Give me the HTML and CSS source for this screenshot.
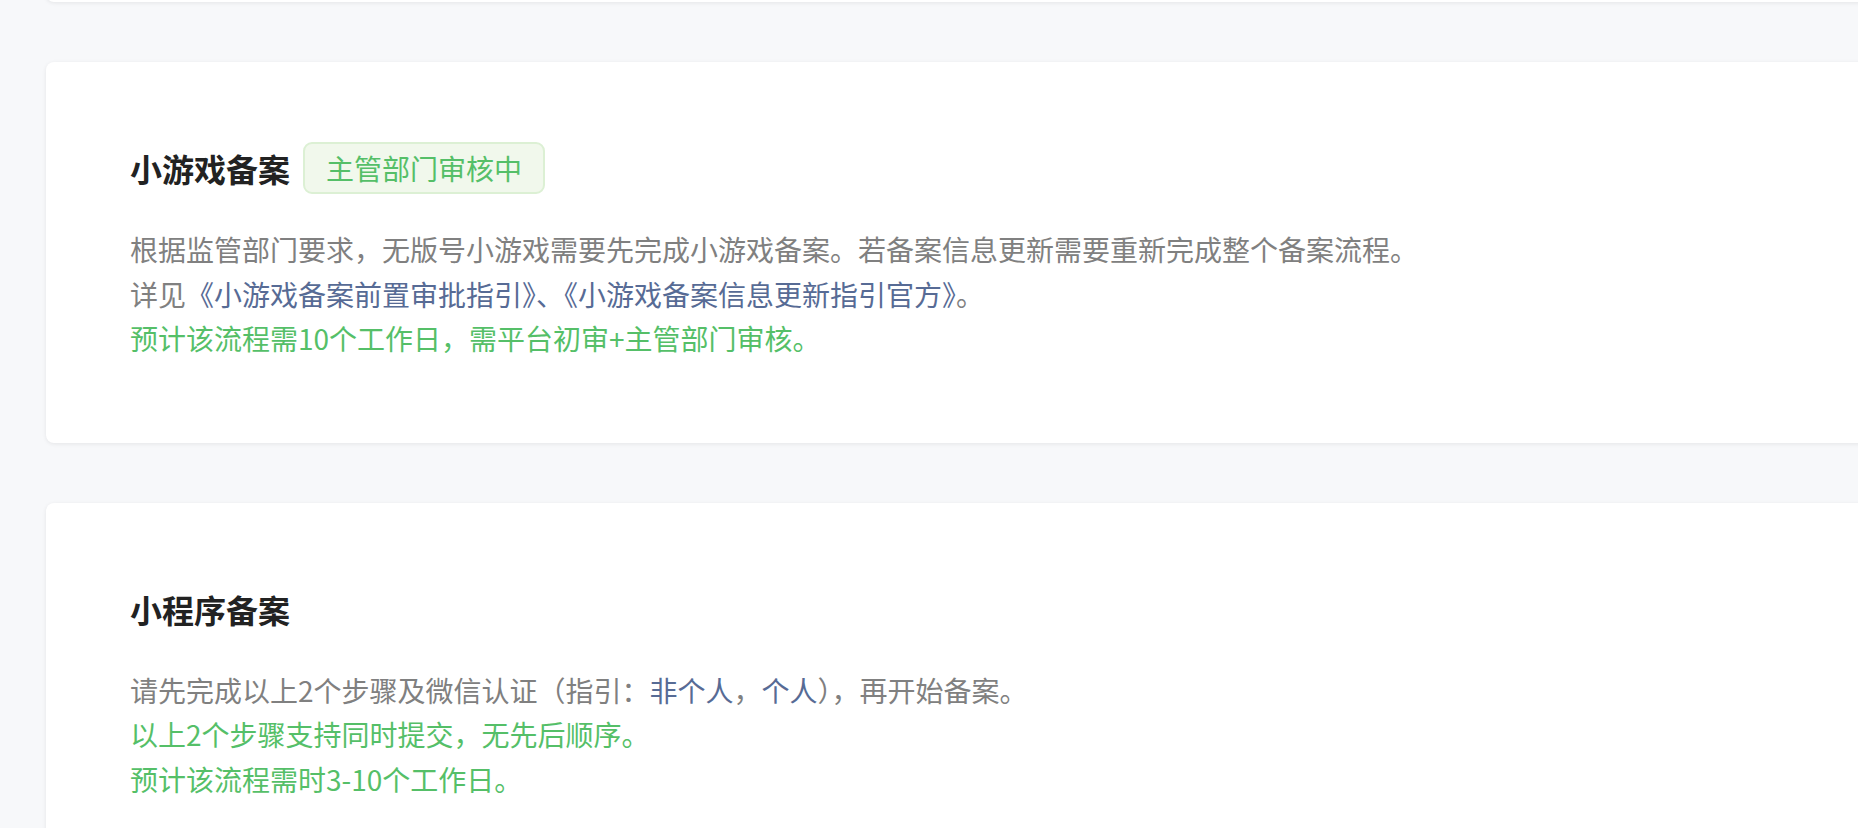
FILE: index.html
```html
<!DOCTYPE html>
<html lang="zh-CN">
<head>
<meta charset="utf-8">
<title>备案</title>
<link rel="stylesheet" href="styles.css">
</head>
<body>
<div class="page">
  <div class="card card-prev"></div>

  <section class="card">
    <div class="card-head">
      <h2 class="card-title">小游戏备案</h2>
      <span class="tag">主管部门审核中</span>
    </div>
    <div class="desc">
      <p class="line">根据监管部门要求，无版号小游戏需要先完成小游戏备案。若备案信息更新需要重新完成整个备案流程。</p>
      <p class="line">详见<a class="link" href="#">《小游戏备案前置审批指引》</a><span class="link">、</span><a class="link" href="#">《小游戏备案信息更新指引官方》</a>。</p>
      <p class="line tip">预计该流程需10个工作日，需平台初审+主管部门审核。</p>
    </div>
  </section>

  <section class="card">
    <div class="card-head">
      <h2 class="card-title">小程序备案</h2>
    </div>
    <div class="desc">
      <p class="line">请先完成以上2个步骤及微信认证（指引：<a class="link" href="#">非个人</a>，<a class="link" href="#">个人</a>），再开始备案。</p>
      <p class="line tip">以上2个步骤支持同时提交，无先后顺序。</p>
      <p class="line tip">预计该流程需时3-10个工作日。</p>
    </div>
  </section>
</div>
</body>
</html>
```

FILE: styles.css
```css
html, body {
  margin: 0;
  padding: 0;
  overflow: hidden;
  background: #f7f8fa;
  font-family: "Noto Sans CJK SC", "Noto Sans", "Liberation Sans", sans-serif;
}

.page {
  display: flex;
  flex-direction: column;
  gap: 60px;
  padding-left: 46px;
}

.card {
  background: #ffffff;
  border-radius: 8px;
  box-shadow: 0 1px 4px rgba(0, 0, 0, 0.08);
  padding: 80px 84px 82px;
  margin-right: -20px;
}

.card-prev {
  height: 40px;
  padding: 0;
  margin-top: -38px;
}

.card-head {
  display: flex;
  align-items: center;
  gap: 13px;
  height: 52px;
}

.card-title {
  margin: 0;
  font-size: 32px;
  font-weight: 700;
  line-height: 52px;
  color: #222222;
}

.tag {
  box-sizing: border-box;
  height: 52px;
  padding: 0 21px;
  border: 2px solid #dcf0d4;
  border-radius: 9px;
  background: #f1f8ec;
  color: #55bf68;
  font-size: 28px;
  line-height: 48px;
}

.desc {
  margin-top: 33px;
}

.line {
  margin: 0;
  font-size: 28px;
  line-height: 44.5px;
  color: #808080;
}

.tip {
  color: #55bf68;
}

.link {
  color: #576b95;
  text-decoration: none;
}
```
